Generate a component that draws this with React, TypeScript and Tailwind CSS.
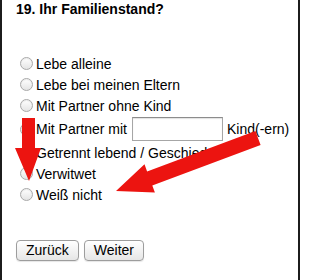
import React from 'react';

const options = [
  { label: 'Lebe alleine' },
  { label: 'Lebe bei meinen Eltern' },
  { label: 'Mit Partner ohne Kind' },
  { label: 'Mit Partner mit', withCount: true },
  { label: 'Getrennt lebend / Geschieden' },
  { label: 'Verwitwet' },
  { label: 'Weiß nicht' },
];

function Radio() {
  return (
    <span className="block w-[13px] h-[13px] shrink-0 rounded-full border border-[#a9a9a9] bg-gradient-to-b from-white to-[#e4e4e4] shadow-[inset_0_1px_1px_rgba(0,0,0,0.08)]" />
  );
}

function Arrows() {
  // red annotation arrows drawn over the form
  return (
    <svg className="absolute left-0 top-0 pointer-events-none" width="300" height="280" viewBox="0 0 300 280">
      <polygon fill="#ec1410" points="20,118 33,118 33,148 39,148 27,181 13,148 20,148" />
      <polygon
        fill="#ec1410"
        points="253.4,131 258.6,145 150.3,185.4 152.9,192.5 114,191 142.5,164.3 145.1,171.4"
      />
    </svg>
  );
}

export default function App() {
  return (
    <div
      className="relative w-[300px] h-[280px] overflow-hidden bg-white border-x-2 border-[#1c1c1c] pl-[14px] text-[14px] text-black"
      style={{ fontFamily: '"Liberation Sans", Arial, sans-serif' }}
    >
      <h2 className="mt-px h-[16px] leading-[16px] font-bold text-[14px]">19. Ihr Familienstand?</h2>

      <div className="mt-[36px] pl-[4px]">
        {options.map((o) => (
          <div key={o.label} className={`flex items-center ${o.withCount ? 'h-[26px]' : 'h-[21px]'}`}>
            <Radio />
            <span className="ml-[3px] leading-[16px] whitespace-nowrap">{o.label}</span>
            {o.withCount && (
              <>
                <input
                  type="text"
                  className="ml-[5px] w-[91px] h-[24px] border border-[#a6a6a6] border-t-[#8c8c8c] bg-white shadow-[inset_0_1px_1px_rgba(0,0,0,0.12)] outline-none"
                />
                <span className="ml-[4px] leading-[16px] whitespace-nowrap">Kind(-ern)</span>
              </>
            )}
          </div>
        ))}
      </div>

      <div className="mt-[35px] flex gap-[5px]">
        <button className="h-[21px] px-[9px] rounded-[4px] border border-[#9d9d9d] bg-gradient-to-b from-white to-[#e6e6e6] leading-[19px] shadow-[0_1px_1px_rgba(0,0,0,0.1)]">
          Zurück
        </button>
        <button className="h-[21px] px-[9px] rounded-[4px] border border-[#9d9d9d] bg-gradient-to-b from-white to-[#e6e6e6] leading-[19px] shadow-[0_1px_1px_rgba(0,0,0,0.1)]">
          Weiter
        </button>
      </div>

      <Arrows />
    </div>
  );
}
